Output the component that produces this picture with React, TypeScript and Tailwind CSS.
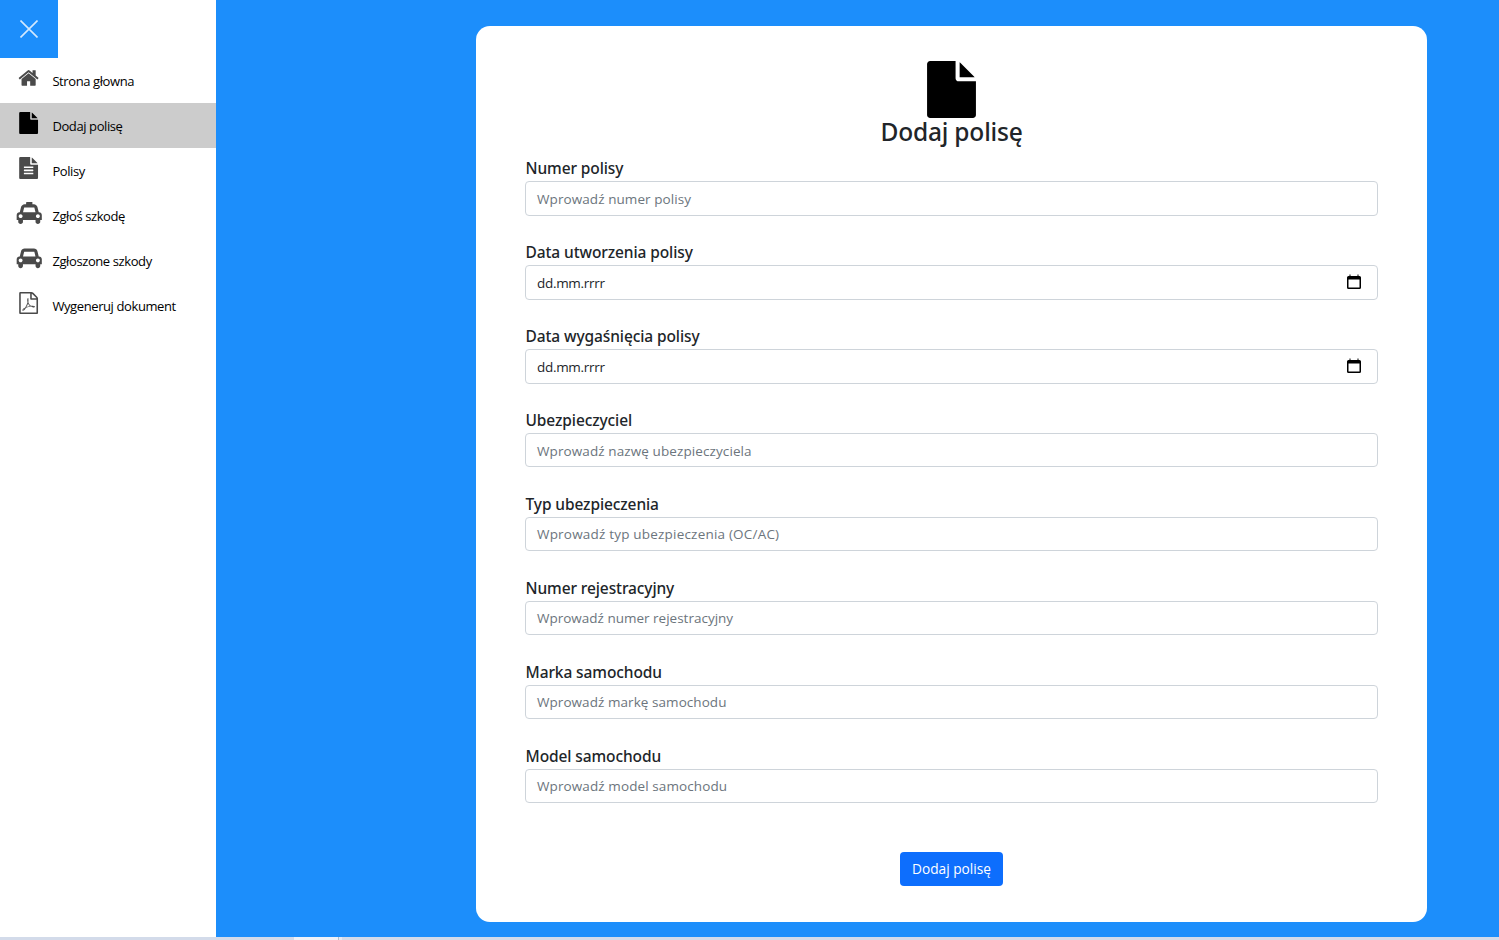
import React from "react";

const FILE =
  "M1152 512v-472q22 14 36 28l408 408q14 14 28 36h-472zM1024 544q0 40 28 68t68 28h544v1056q0 40-28 68t-68 28h-1344q-40 0-68-28t-28-68v-1600q0-40 28-68t68-28h800v544z";
const FILE_TEXT =
  "M1596 476q14 14 28 36h-472v-472q22 14 36 28zm-476 164h544v1056q0 40-28 68t-68 28h-1344q-40 0-68-28t-28-68v-1600q0-40 28-68t68-28h800v544q0 40 28 68t68 28zm160 736v-64q0-14-9-23t-23-9h-704q-14 0-23 9t-9 23v64q0 14 9 23t23 9h704q14 0 23-9t9-23zm0-256v-64q0-14-9-23t-23-9h-704q-14 0-23 9t-9 23v64q0 14 9 23t23 9h704q14 0 23-9t9-23zm0-256v-64q0-14-9-23t-23-9h-704q-14 0-23 9t-9 23v64q0 14 9 23t23 9h704q14 0 23-9t9-23z";
const HOME =
  "M1472 992v480q0 26-19 45t-45 19h-384v-384h-256v384h-384q-26 0-45-19t-19-45v-480q0-1 .5-3t.5-3l575-474 575 474q1 2 1 6zm223-69l-62 74q-8 9-21 11h-3q-13 0-21-7l-692-577-692 577q-12 8-24 7-13-2-21-11l-62-74q-8-10-7-23.500t11-21.500l719-599q32-26 76-26t76 26l244 204v-195q0-14 9-23t23-9h192q14 0 23 9t9 23v408l219 182q10 8 11 21.500t-7 23.500z";
const CAR =
  "M480 1088q0-66-47-113t-113-47-113 47-47 113 47 113 113 47 113-47 47-113zm36-320h1016l-89-357q-2-8-14-17.500t-21-9.500h-768q-9 0-21 9.500t-14 17.500zm1372 320q0-66-47-113t-113-47-113 47-47 113 47 113 113 47 113-47 47-113zm160-96v384q0 14-9 23t-23 9h-96v128q0 80-56 136t-136 56-136-56-56-136v-128h-1024v128q0 80-56 136t-136 56-136-56-56-136v-128h-96q-14 0-23-9t-9-23v-384q0-93 65.500-158.500t158.500-65.500h28l105-419q23-94 104-157.500t179-63.500h768q98 0 179 63.500t104 157.500l105 419h28q93 0 158.500 65.500t65.500 158.500z";
const PDF =
  "M1596 380q28 28 48 76t20 88v1152q0 40-28 68t-68 28h-1344q-40 0-68-28t-28-68v-1600q0-40 28-68t68-28h896q40 0 88 20t76 48zm-444-244v376h376q-10-29-22-41l-313-313q-12-12-41-22zm384 1528v-1024h-416q-40 0-68-28t-28-68v-416h-768v1536h1280zm-514-593q33 26 84 56 59-7 117-7 147 0 177 49 16 22 2 52 0 1-1 2l-2 2v1q-6 38-71 38-48 0-115-20t-130-53q-221 24-392 83-153 262-242 262-15 0-28-7l-24-12q-1-1-6-5-10-10-6-36 9-40 56-91.500t132-96.500q14-9 23 6 2 2 2 4 52-85 107-197 68-136 104-262-24-82-30.500-159.500t6.500-127.500q11-40 42-40h22q23 0 35 15 18 21 9 68-2 6-4 8 1 3 1 8v30q-2 123-14 192 55 164 146 238zm-576 411q52-24 137-158-51 40-87.500 84t-49.500 74zm398-920q-15 42-2 132 1-7 7-44 0-3 7-43 1-4 4-8-1-1-1-2-1-2-1-3-1-22-13-36 0 1-1 2v2zm-124 661q135-54 284-81-2-1-13-9.500t-16-13.500q-76-67-127-176-27 86-83 197-30 56-45 83zm646-16q-24-24-140-24 76 28 124 28 14 0 18-1 0-1-2-3z";

function Glyph({ d, className }: { d: string; className: string }) {
  return (
    <svg viewBox="0 0 1792 1792" fill="currentColor" className={className}>
      <path d={d} />
    </svg>
  );
}

function MenuGlyph({ d }: { d: string }) {
  return (
    <svg viewBox="32 0 1792 1792" fill="currentColor" className="size-[22px]">
      <path d={d} />
    </svg>
  );
}

function Vehicle({ taxi = false }: { taxi?: boolean }) {
  return (
    <svg viewBox="-40 0 2088 1792" fill="currentColor" className="h-[22px] w-[26px] shrink-0">
      {taxi && <path d="M768 256V32q0-32 32-32h448q32 0 32 32v224z" />}
      <path d={CAR} transform={taxi ? "translate(0 64)" : undefined} />
    </svg>
  );
}

const menu = [
  { label: "Strona głowna", icon: <MenuGlyph d={HOME} /> },
  { label: "Dodaj polisę", icon: <MenuGlyph d={FILE} />, active: true },
  { label: "Polisy", icon: <MenuGlyph d={FILE_TEXT} /> },
  { label: "Zgłoś szkodę", icon: <Vehicle taxi /> },
  { label: "Zgłoszone szkody", icon: <Vehicle /> },
  { label: "Wygeneruj dokument", icon: <MenuGlyph d={PDF} /> },
];

const fields = [
  { label: "Numer polisy", hint: "Wprowadź numer polisy", box: "h-[35px] pt-px tracking-[0.08px]" },
  { label: "Data utworzenia polisy", date: true, hint: "dd.mm.rrrr", box: "h-[35px] pt-px tracking-[-0.3px]" },
  { label: "Data wygaśnięcia polisy", date: true, hint: "dd.mm.rrrr", box: "h-[35px] pt-px tracking-[-0.3px]" },
  { label: "Ubezpieczyciel", hint: "Wprowadź nazwę ubezpieczyciela", box: "h-[34px] pt-[2px] tracking-[0.1px]" },
  { label: "Typ ubezpieczenia", hint: "Wprowadź typ ubezpieczenia (OC/AC)", box: "h-[34px] tracking-[0.2px]" },
  { label: "Numer rejestracyjny", hint: "Wprowadź numer rejestracyjny", box: "h-[34px]" },
  { label: "Marka samochodu", hint: "Wprowadź markę samochodu", box: "h-[34px] tracking-[0.06px]" },
  { label: "Model samochodu", hint: "Wprowadź model samochodu", box: "h-[34px] tracking-[0.1px]" },
];

function CalendarIcon() {
  return (
    <svg viewBox="0 0 14 16" className="mr-[5px] mb-[3px] h-4 w-[14px]">
      <path d="M2.500 0.500h1v1.500h7v-1.500h1v1.500h1q1.500 0 1.500 1.500v10q0 1.500-1.500 1.500h-11q-1.500 0-1.500-1.500v-10q0-1.500 1.500-1.500h1zM1.500 5.500v8h11v-8z" />
    </svg>
  );
}

export default function App() {
  return (
    <div className="flex h-[940px] w-[1499px] flex-col overflow-hidden bg-[#1c8efb] font-['Open_Sans',sans-serif]">
      <div className="flex h-[937px]">
        <aside className="w-[216px] bg-white">
          <button className="flex size-[58px] items-center justify-center bg-[#1c8efb] text-[#d2e8fe]">
            <svg viewBox="0 0 18 18" className="size-[18px]" stroke="currentColor" strokeWidth="1.600">
              <path d="M0.500 0.500l17 17M17.500 0.500l-17 17" />
            </svg>
          </button>
          <nav>
            {menu.map((m) => (
              <a
                key={m.label}
                className={m.active ? "flex h-[45px] items-start bg-[#cccccc] text-black" : "flex h-[45px] items-start text-[#4a4a4a]"}
              >
                <span className="mt-[9px] ml-4 flex w-[26px] justify-center">{m.icon}</span>
                <span className="mt-[14px] ml-[10.400px] text-[13px] leading-[18px] font-[370] tracking-[-0.4px] whitespace-nowrap text-black">
                  {m.label}
                </span>
              </a>
            ))}
          </nav>
        </aside>
        <main className="flex-1 bg-[#1c8efb] pt-[26px] pl-[260px]">
          <form className="flex h-[896px] w-[951px] flex-col items-center rounded-[14px] bg-white px-[49px] pt-[35px]">
            <Glyph d={FILE} className="size-[57px] shrink-0 text-black" />
            <h1 className="h-[37px] font-['Noto_Sans',sans-serif] text-[24.500px] leading-[27px] font-medium tracking-[-0.2px] text-[#212529]">
              Dodaj polisę
            </h1>
            <div className="flex w-full flex-col">
              {fields.map((f) => (
                <div key={f.label} className="h-[84px]">
                  <label className="block h-[26px] pt-[3px] pl-[0.500px] font-['Noto_Sans',sans-serif] text-[15.500px] leading-[20px] font-medium tracking-[-0.1px] whitespace-nowrap text-[#212529]">
                    {f.label}
                  </label>
                  <div
                    className={`flex items-center justify-between rounded-[4px] border border-[#ced4da] px-[11px] text-[13.500px] ${f.box} ${f.date ? "text-[#212529]" : "text-[#6c757d]"}`}
                  >
                    <span>{f.hint}</span>
                    {f.date && <CalendarIcon />}
                  </div>
                </div>
              ))}
            </div>
            <button className="mt-[25px] h-[34px] w-[103px] rounded-[4px] bg-[#0d6efd] text-[13.700px] text-white">Dodaj polisę</button>
          </form>
        </main>
      </div>
      <footer className="flex h-[3px] bg-[#d3dbea]">
        <div className="ml-[294px] w-[44px] bg-[#eef2f9]" />
        <div className="w-px bg-[#b5bcc9]" />
        <div className="w-[3px] bg-[#e4eaf4]" />
      </footer>
    </div>
  );
}
